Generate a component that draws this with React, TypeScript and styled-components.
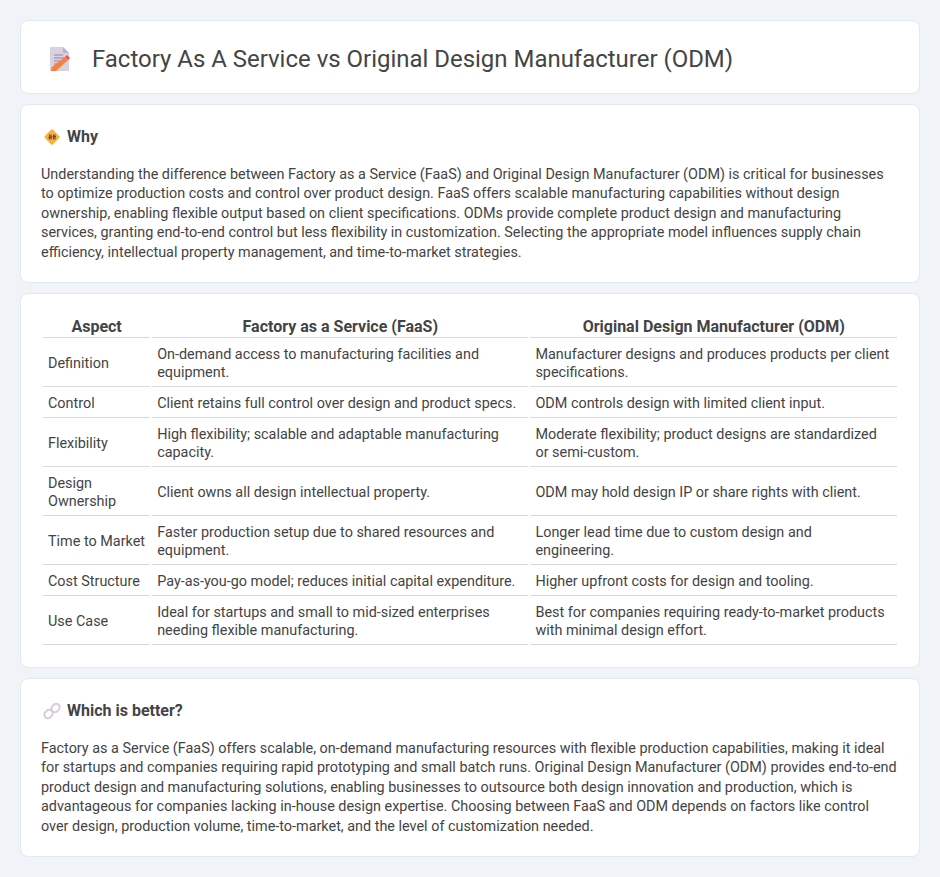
import React from "react";
import styled, { createGlobalStyle } from "styled-components";

const Global = createGlobalStyle`
  html, body { margin: 0; padding: 0; background: #f0f4f8; }
  body { font-family: Roboto, "Liberation Sans", sans-serif; color: #444; }
`;
const Page = styled.div`
  padding: 20px;
  display: flex;
  flex-direction: column;
  gap: 10px;
`;
const Card = styled.section`
  background: #fff;
  border: 1px solid #e2e8f0;
  border-radius: 8px;
  padding: 20px;
`;
const HeaderCard = styled(Card)`
  display: flex;
  align-items: center;
  gap: 15px;
  box-sizing: border-box;
  height: 74px;
  padding: 22px 20px 18px;
`;
const HeaderIcon = styled.span`
  display: flex;
  justify-content: center;
  width: 36px;
`;
const Title = styled.h1`
  margin: 0;
  font-size: 23.96px;
  font-weight: 400;
  color: #444;
  line-height: 32px;
`;
const SectionHead = styled.div`
  display: flex;
  align-items: center;
  gap: 4px;
  margin-bottom: 15.6px;
`;
const SectionIcon = styled.span`
  display: flex;
  justify-content: center;
  width: 22px;
`;
const SectionTitle = styled.h2`
  margin: 0;
  font-size: 16px;
  font-weight: 700;
  color: #444;
  line-height: 24px;
`;
const Para = styled.p`
  margin: 0 0 -0.6px;
  font-size: 14.4px;
  line-height: 19.6px;
  color: #444;
`;
const Table = styled.table`
  width: 100%;
  border-collapse: separate;
  border-spacing: 2px;
  font-size: 14.4px;
  line-height: 18px;
`;
const Th = styled.th`
  font-size: 16px;
  font-weight: 700;
  text-align: center;
  padding: 1px 0;
  line-height: 19px;
  border-bottom: 1px solid #d9d9d9;
`;
const Td = styled.td`
  padding: 6px 5px 4px;
  border-bottom: 1px solid #d9d9d9;
  vertical-align: middle;
`;

const DocIcon = () => (
  <svg width="24" height="24" viewBox="0 0 24 24">
    <path d="M3 0h13l6 6v18H3z" fill="#d9d0e2" />
    <path d="M16 0l6 6h-6z" fill="#bdb2cb" />
    <path d="M7 8h9M7 11h11M7 14h9M7 17h5" stroke="#8f8a9c" strokeWidth="1" />
    <path d="M4 24l1-4 13-10 3 3L9 24z" fill="#f5813c" />
    <path d="M18 10l2-2 3 3-2 2z" fill="#f0524f" />
  </svg>
);
const WhyIcon = () => (
  <svg width="18" height="18" viewBox="0 0 18 18">
    <rect x="3.200" y="3.200" width="11.600" height="11.600" rx="1.500" transform="rotate(45 9 9)" fill="#fbb040" />
    <path d="M6.500 6.500v5M8 6.500v5M10.500 6.500v5M12 6.500v5M5.500 9.500h3.500M9.500 8.500h3.500" stroke="#5b4a3a" strokeWidth="1.100" />
  </svg>
);
const LinkIcon = () => (
  <svg width="18" height="18" viewBox="0 0 18 18" fill="none" stroke="#d6cde0" strokeWidth="2">
    <rect x="9" y="1.500" width="7" height="9" rx="3.500" transform="rotate(45 12.500 6)" />
    <rect x="2" y="7.500" width="7" height="9" rx="3.500" transform="rotate(45 5.500 12)" />
  </svg>
);

const rows = [
  ["Definition", "On-demand access to manufacturing facilities and equipment.", "Manufacturer designs and produces products per client specifications."],
  ["Control", "Client retains full control over design and product specs.", "ODM controls design with limited client input."],
  ["Flexibility", "High flexibility; scalable and adaptable manufacturing capacity.", "Moderate flexibility; product designs are standardized or semi-custom."],
  ["Design Ownership", "Client owns all design intellectual property.", "ODM may hold design IP or share rights with client."],
  ["Time to Market", "Faster production setup due to shared resources and equipment.", "Longer lead time due to custom design and engineering."],
  ["Cost Structure", "Pay-as-you-go model; reduces initial capital expenditure.", "Higher upfront costs for design and tooling."],
  ["Use Case", "Ideal for startups and small to mid-sized enterprises needing flexible manufacturing.", "Best for companies requiring ready-to-market products with minimal design effort."],
];

export default function App() {
  return (
    <>
      <Global />
      <Page>
        <HeaderCard>
          <HeaderIcon><DocIcon /></HeaderIcon>
          <Title>Factory As A Service vs Original Design Manufacturer (ODM)</Title>
        </HeaderCard>
        <Card>
          <SectionHead>
            <SectionIcon><WhyIcon /></SectionIcon>
            <SectionTitle>Why</SectionTitle>
          </SectionHead>
          <Para>
            Understanding the difference between Factory as a Service (FaaS) and Original Design Manufacturer (ODM) is critical for businesses to optimize production costs and control over product design. FaaS offers scalable manufacturing capabilities without design ownership, enabling flexible output based on client specifications. ODMs provide complete product design and manufacturing services, granting end-to-end control but less flexibility in customization. Selecting the appropriate model influences supply chain efficiency, intellectual property management, and time-to-market strategies.
          </Para>
        </Card>
        <Card>
          <Table>
            <thead>
              <tr>
                <Th>Aspect</Th>
                <Th>Factory as a Service (FaaS)</Th>
                <Th>Original Design Manufacturer (ODM)</Th>
              </tr>
            </thead>
            <tbody>
              {rows.map((r) => (
                <tr key={r[0]}>
                  {r.map((c) => (
                    <Td key={c}>{c}</Td>
                  ))}
                </tr>
              ))}
            </tbody>
          </Table>
        </Card>
        <Card>
          <SectionHead>
            <SectionIcon><LinkIcon /></SectionIcon>
            <SectionTitle>Which is better?</SectionTitle>
          </SectionHead>
          <Para>
            Factory as a Service (FaaS) offers scalable, on-demand manufacturing resources with flexible production capabilities, making it ideal for startups and companies requiring rapid prototyping and small batch runs. Original Design Manufacturer (ODM) provides end-to-end product design and manufacturing solutions, enabling businesses to outsource both design innovation and production, which is advantageous for companies lacking in-house design expertise. Choosing between FaaS and ODM depends on factors like control over design, production volume, time-to-market, and the level of customization needed.
          </Para>
        </Card>
      </Page>
    </>
  );
}
